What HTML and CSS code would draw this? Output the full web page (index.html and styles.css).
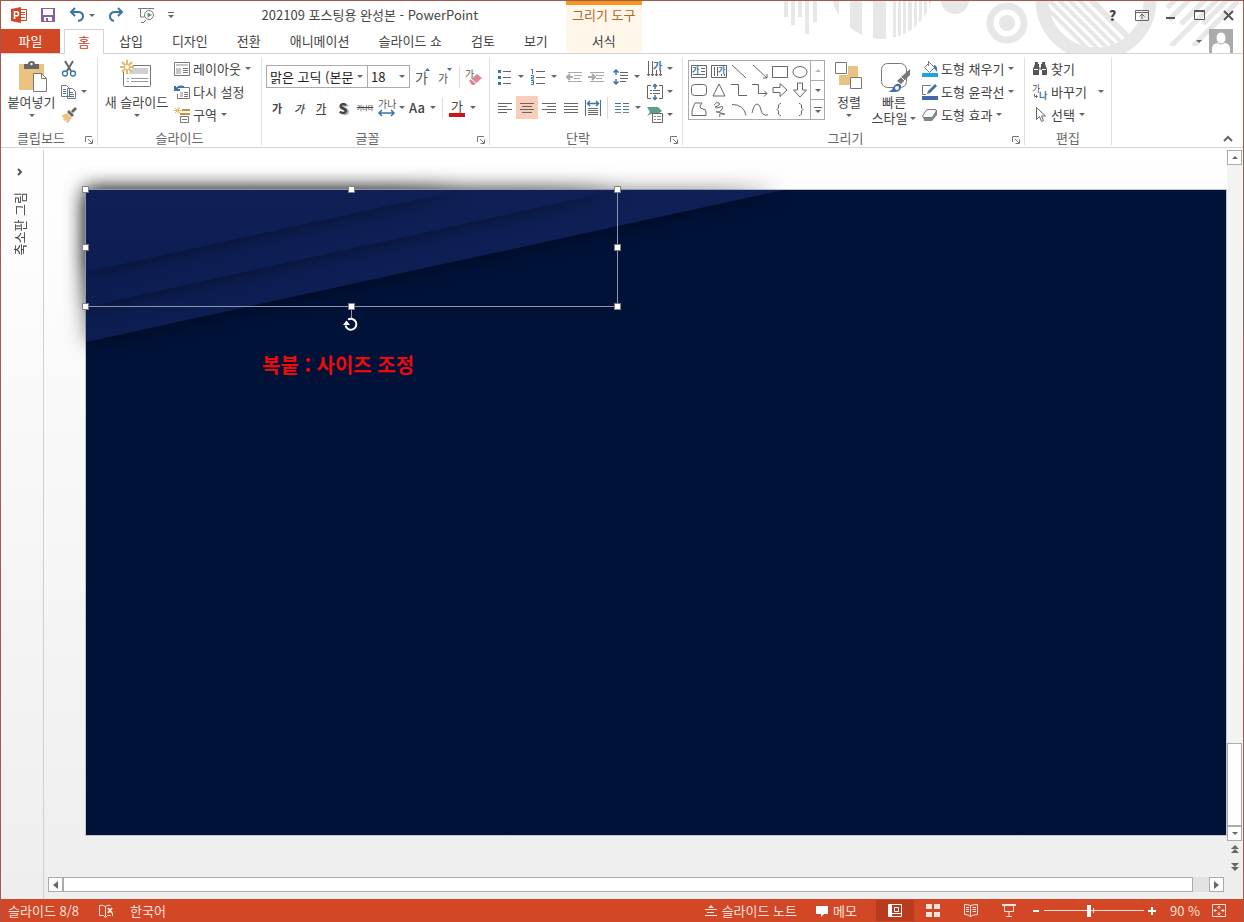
FILE: index.html
```html
<!DOCTYPE html>
<html lang="ko">
<head>
  <meta charset="UTF-8">
  <title>202109 포스팅용 완성본 - PowerPoint</title>
  <link rel="stylesheet" href="styles.css">
</head>
<body>

  <header class="header">
    <svg class="header-art" width="464" height="52" viewBox="0 1 464 52" fill="#e7e7e7" aria-hidden="true">
      <defs>
        <clipPath id="disc"><circle cx="103" cy="-12" r="51"/></clipPath>
        <clipPath id="hole"><circle cx="316" cy="0" r="48"/></clipPath>
        <clipPath id="corner"><path d="M386 0h74v46h-74z"/></clipPath>
      </defs>
      <path d="M5 0h4v17H5zM12 0h4v25h-4zM19 0h4v17h-4zM26 0h4v34h-4zM34 0h4v22h-4z"/>
      <path clip-path="url(#disc)" d="M50 0h10v40H50zM71 0h12v40H71zM94 0h13v40H94zM114 0h3v40h-3zM119 0h3v40h-3zM124 0h3v40h-3zM129 0h4v40h-4zM135 0h3v40h-3zM140 0h3v40h-3zM145 0h3v40h-3zM150 0h3v40h-3z"/>
      <circle cx="176" cy="0" r="14"/>
      <circle cx="228" cy="23" r="17" fill="none" stroke="#e7e7e7" stroke-width="7"/>
      <circle cx="228" cy="23" r="8"/>
      <circle cx="317" cy="0" r="54" fill="none" stroke="#e7e7e7" stroke-width="13"/>
      <g clip-path="url(#hole)" stroke="#e7e7e7" stroke-width="4">
        <path d="M262 2l50 50M270 0l50 50M280 0l50 50M290 0l50 50M300 0l50 50"/>
        <path d="M312 0l50 50" stroke-width="6"/>
      </g>
      <g clip-path="url(#corner)" stroke="#e7e7e7" stroke-width="5">
        <path d="M388 8l12-12M390 20l24-24M402 24l28-28M392 46l50-50M424 24l28-28M414 46l46-46"/>
      </g>
    </svg>

    <div class="title-row">
      <div class="quick-access">
        <button aria-label="PowerPoint">
          <svg width="16" height="16" viewBox="0 0 16 16"><path fill="#fff" stroke="#d24726" d="M8.500 2.500h7v11h-7z"/><path fill="#d24726" d="M10 5h4v1h-4zM10 7h4v1h-4zM10 10h4v1h-4z"/><path fill="#d24726" d="M0 2l10-2v16L0 14z"/><path fill="none" stroke="#fff" stroke-width="1.600" d="M3.500 12V4.800h2.300q1.700 0 1.700 2t-1.700 2H3.500"/></svg>
        </button>
        <button aria-label="저장">
          <svg width="16" height="16" viewBox="0 0 16 16"><path fill="#8560a8" d="M1 1h14v14H1z"/><path fill="#fff" d="M3 2h10v6H3zM4 10h8v4H8v-3H6v3H4z"/></svg>
        </button>
        <button aria-label="실행 취소">
          <svg width="16" height="16" viewBox="0 0 16 16" fill="none" stroke="#3b73a8" stroke-width="2"><path d="M6 1L2 5l4 4M2 5h7q5 0 5 4.500Q14 13 9 14"/></svg>
          <span class="caret"></span>
        </button>
        <button aria-label="다시 실행">
          <svg width="16" height="16" viewBox="0 0 16 16" fill="none" stroke="#3b73a8" stroke-width="2"><path d="M10 1l4 4-4 4M14 5H7Q2 5 2 9.500 2 13 6 14"/></svg>
        </button>
        <button aria-label="처음부터 시작">
          <svg width="18" height="16" viewBox="0 0 18 16" fill="none" stroke="#777"><path d="M1 1.500h16M3.500 2v8h4M4 15.500h3M7 15l2-2"/><circle cx="12" cy="8" r="4.500" fill="#fff"/><path fill="#4f9b75" stroke="none" d="M10.500 5.500v5L15 8z"/></svg>
        </button>
        <button aria-label="빠른 실행 도구 모음 사용자 지정">
          <svg width="6" height="6" viewBox="0 0 6 6" fill="#666"><path d="M0 0h6v1H0zM0 3h6L3 6z"/></svg>
        </button>
      </div>
      <h1 class="doc-title">202109 포스팅용 완성본 - PowerPoint</h1>
    </div>
    <div class="context-title">그리기 도구</div>
    <div class="window-controls">
      <button aria-label="도움말" class="help">?</button>
      <button aria-label="리본 메뉴 표시 옵션">
        <svg width="14" height="11" viewBox="0 0 14 11" fill="none" stroke="#666"><path d="M.5.5h13v10H.5zM1 2.500h12M7 9V4M4.500 6.500L7 4l2.500 2.500"/></svg>
      </button>
      <button aria-label="최소화">
        <svg width="10" height="11" viewBox="0 0 10 11"><path fill="#555" d="M0 7h9v2H0z"/></svg>
      </button>
      <button aria-label="최대화">
        <svg width="11" height="11" viewBox="0 0 11 11" fill="none" stroke="#555"><path d="M.5.5h10v9H.5zM1 1.500h9"/></svg>
      </button>
      <button aria-label="닫기">
        <svg width="11" height="11" viewBox="0 0 11 11" stroke="#555" stroke-width="2"><path d="M1 1l9 9M10 1l-9 9"/></svg>
      </button>
    </div>

    <nav class="tabs">
      <button class="tab tab-file">파일</button>
      <button class="tab tab-active">홈</button>
      <button class="tab">삽입</button>
      <button class="tab">디자인</button>
      <button class="tab">전환</button>
      <button class="tab">애니메이션</button>
      <button class="tab">슬라이드 쇼</button>
      <button class="tab">검토</button>
      <button class="tab">보기</button>
    </nav>
    <button class="tab tab-context">서식</button>
    <div class="account">
      <span class="caret"></span>
      <button aria-label="계정">
        <svg width="24" height="24" viewBox="0 0 24 24"><path fill="#ababab" d="M0 0h24v24H0z"/><path fill="#fff" d="M3 24v-4q0-6 6-6h6q6 0 6 6v4z"/><ellipse cx="12" cy="9" rx="5" ry="6" fill="#fff" stroke="#ababab"/></svg>
      </button>
    </div>
  </header>

  <section class="ribbon">
    <!-- Clipboard -->
    <div class="group">
      <div class="group-body">
        <button class="big big-paste">
          <svg width="32" height="32" viewBox="0 0 32 32"><path fill="#eac282" d="M3 4h25v26H3z"/><path fill="#666" d="M8 4h4q0-3 3.500-3T19 4h4v5H8z"/><circle cx="15.500" cy="4" r="1.200" fill="#fff"/><path fill="#fff" stroke="#777" d="M17.500 13.500h8l5 5v13h-13z"/><path fill="none" stroke="#777" d="M25.500 13.500v5h5"/></svg>
          <span>붙여넣기</span>
          <span class="caret"></span>
        </button>
        <div class="stack stack-icons">
          <button aria-label="잘라내기"><svg width="16" height="16" viewBox="0 0 16 16" fill="none"><path stroke="#666" stroke-width="2" d="M4 0l6 10M12 0L6 10"/><circle cx="4" cy="12.500" r="2.500" stroke="#3b73a8" stroke-width="1.300"/><circle cx="12" cy="12.500" r="2.500" stroke="#3b73a8" stroke-width="1.300"/></svg></button>
          <button aria-label="복사"><svg width="16" height="16" viewBox="0 0 16 16" fill="#fff" stroke="#777"><path d="M.5 1.500h5l3 3v8h-8zM6.500 4.500h5l3 3v7h-8z"/><path stroke="#3b73a8" d="M2 5.500h3M2 7.500h3M2 9.500h3M8 8.500h4M8 10.500h5M8 12.500h5"/></svg><span class="caret"></span></button>
          <button aria-label="서식 복사"><svg width="16" height="16" viewBox="0 0 16 16"><path fill="#eac282" d="M0 9l6-3 5 5-4 5-2-1 1-2-3 1-1-2 1-1z"/><path fill="#666" d="M6 5l2-2 5 5-2 2zM10 4l4-4 2 2-4 4z"/></svg></button>
        </div>
      </div>
      <div class="group-foot"><span>클립보드</span><button class="launcher" aria-label="클립보드 옵션"><svg width="8" height="8" viewBox="0 0 8 8" fill="none" stroke="#777"><path d="M.5 6V.5H7M3 3l4 4M7.500 3.500v4h-4"/></svg></button></div>
    </div>

    <!-- Slides -->
    <div class="group">
      <div class="group-body">
        <button class="big big-slide">
          <svg width="32" height="32" viewBox="0 0 32 32"><path fill="#fff" stroke="#777" d="M2.500 5.500h27v20q0 1-1 1h-25q-1 0-1-1z"/><path fill="#d0d0d0" d="M11 8h16v6H7z"/><path stroke="#999" d="M6 18.500h2M10 18.500h17M6 21.500h2M10 21.500h17"/><circle cx="6" cy="7" r="6" fill="#fff"/><path stroke="#e5b767" stroke-width="2" d="M6 0v14M-1 7h14M1 2l10 10M11 2L1 12"/><circle cx="6" cy="7" r="2" fill="#fff"/></svg>
          <span>새 슬라이드</span>
          <span class="caret"></span>
        </button>
        <div class="stack stack-slide">
          <button><svg width="16" height="16" viewBox="0 0 16 16" fill="none" stroke="#777"><path d="M.5 1.500h15v13H.5z"/><path fill="#c4c4c4" stroke="none" d="M2 3h12v2H2zM2 7h5v6H2z"/><path d="M9 7.500h5M9 9.500h5M9 11.500h5"/></svg>레이아웃<span class="caret"></span></button>
          <button><svg width="16" height="16" viewBox="0 0 16 16" fill="none" stroke="#777"><path d="M5 3.500h10.500v11h-12V10"/><path fill="#c4c4c4" stroke="none" d="M6 8h3v5H6z"/><path d="M10 8.500h4M10 10.500h4M10 12.500h4"/><path stroke="#3b73a8" stroke-width="2" d="M1 2v4h5M1 6q4-5 9-3"/></svg>다시 설정</button>
          <button><svg width="16" height="16" viewBox="0 0 16 16" fill="none"><path stroke="#e5b767" d="M4 0v7M0 3.500h7M1 1l5 5M6 1L1 6"/><path stroke="#c98f3e" stroke-width="2" d="M8 3h8M6 7h10"/><path stroke="#777" d="M6.500 9.500h8v6h-8zM8 12.500h5"/></svg>구역<span class="caret"></span></button>
        </div>
      </div>
      <div class="group-foot"><span>슬라이드</span></div>
    </div>

    <!-- Font -->
    <div class="group">
      <div class="group-body tool-rows">
        <div class="tools">
          <label class="combo combo-font">
            <select aria-label="글꼴"><option>맑은 고딕 (본문</option></select>
            <span class="caret"></span>
          </label>
          <label class="combo combo-size">
            <select aria-label="글꼴 크기"><option>18</option></select>
            <span class="caret"></span>
          </label>
          <button class="tool grow" aria-label="글꼴 크기 크게"><svg width="18" height="18" viewBox="0 0 18 18"><text x="1" y="15" font-size="14">가</text><path fill="#3b73a8" d="M11 3h5l-2.500-3z"/></svg></button>
          <button class="tool" aria-label="글꼴 크기 작게"><svg width="18" height="18" viewBox="0 0 18 18"><text x="2" y="15" font-size="11">가</text><path fill="#3b73a8" d="M11 0h5l-2.500 3z"/></svg></button>
          <span class="divider"></span>
          <button class="tool" aria-label="모든 서식 지우기"><svg width="18" height="18" viewBox="0 0 18 18"><text x="0" y="10" font-size="10">가</text><path fill="#dd8594" d="M4 13l8-7 5 4-8 7H7z"/><path stroke="#fff" d="M6 11l5 4"/></svg></button>
        </div>
        <div class="tools">
          <button class="tool hangul"><b>가</b></button>
          <button class="tool hangul"><i>가</i></button>
          <button class="tool hangul"><u>가</u></button>
          <button class="tool shadow">S</button>
          <button class="tool strike"><s>가나다</s></button>
          <button class="tool spacing" aria-label="문자 간격"><svg width="18" height="18" viewBox="0 0 18 18"><text x="0" y="9" font-size="10">가나</text><path fill="none" stroke="#3b73a8" stroke-width="1.500" d="M1 14h15M4 11l-3 3 3 3M13 11l3 3-3 3"/></svg><span class="caret"></span></button>
          <button class="tool split case">Aa<span class="caret"></span></button>
          <span class="divider"></span>
          <button class="tool split font-color"><span>가</span><span class="caret"></span></button>
        </div>
      </div>
      <div class="group-foot"><span>글꼴</span><button class="launcher" aria-label="글꼴 옵션"><svg width="8" height="8" viewBox="0 0 8 8" fill="none" stroke="#777"><path d="M.5 6V.5H7M3 3l4 4M7.500 3.500v4h-4"/></svg></button></div>
    </div>

    <!-- Paragraph -->
    <div class="group">
      <div class="group-body">
        <div class="tool-rows">
          <div class="tools">
            <button class="tool split" aria-label="글머리 기호"><svg width="16" height="16" viewBox="0 0 16 16"><path stroke="#666" d="M6 2.500h8M6 8.500h8M6 14.500h8"/><path fill="#3b73a8" d="M1 1h3v3H1zM1 7h3v3H1zM1 13h3v3H1z"/></svg><span class="caret"></span></button>
            <button class="tool split" aria-label="번호 매기기"><svg width="16" height="16" viewBox="0 0 16 16"><path stroke="#666" d="M6 2.500h9M6 8.500h9M6 14.500h9"/><path fill="none" stroke="#3b73a8" d="M1 .5h1.500V5M1 6.500h2.500v2h-2v1.500H4M1 11.500h2.500v4H1M1.500 13.500h2"/></svg><span class="caret"></span></button>
            <button class="tool push" aria-label="목록 수준 줄임"><svg width="16" height="16" viewBox="0 0 16 16" stroke="#aaa" fill="none"><path d="M2 3.500h14M8 6.500h8M8 9.500h6M2 12.500h14"/><path stroke-width="2" d="M4 5L1 8l3 3M1 8h6"/></svg></button>
            <button class="tool" aria-label="목록 수준 늘림"><svg width="16" height="16" viewBox="0 0 16 16" stroke="#aaa" fill="none"><path d="M2 3.500h14M8 6.500h8M8 9.500h6M2 12.500h14"/><path stroke-width="2" d="M4 5l3 3-3 3M7 8H0"/></svg></button>
            <button class="tool split push" aria-label="줄 간격"><svg width="16" height="16" viewBox="0 0 16 16" fill="none"><path stroke="#666" d="M7 3.500h8M7 6.500h8M7 9.500h8M7 12.500h6"/><path stroke="#3b73a8" stroke-width="1.500" d="M3 1v5M.5 3.500L3 1l2.500 2.500M3 10v5M.5 12.500L3 15l2.500-2.500"/></svg><span class="caret"></span></button>
          </div>
          <div class="tools">
            <button class="tool" aria-label="왼쪽 맞춤"><svg width="16" height="16" viewBox="0 0 16 16" stroke="#666"><path d="M1 3.500h14M1 6.500h9M1 9.500h14M1 12.500h9"/></svg></button>
            <button class="tool tool-on" aria-label="가운데 맞춤"><svg width="16" height="16" viewBox="0 0 16 16" stroke="#666"><path d="M1 3.500h14M3 6.500h10M1 9.500h14M3 12.500h10"/></svg></button>
            <button class="tool" aria-label="오른쪽 맞춤"><svg width="16" height="16" viewBox="0 0 16 16" stroke="#666"><path d="M1 3.500h14M6 6.500h9M1 9.500h14M6 12.500h9"/></svg></button>
            <button class="tool" aria-label="양쪽 맞춤"><svg width="16" height="16" viewBox="0 0 16 16" stroke="#666"><path d="M1 3.500h14M1 6.500h14M1 9.500h14M1 12.500h14"/></svg></button>
            <button class="tool" aria-label="균등 분할"><svg width="16" height="16" viewBox="0 0 16 16" fill="none" stroke="#666"><path d="M3 8.500h10M3 10.500h10M3 12.500h10M3 14.500h10"/><path stroke="#3b73a8" d="M.5 0v16M15.500 0v16"/><path stroke="#3b73a8" stroke-width="1.500" d="M3 3.500h10M5 1L2.500 3.500 5 6M11 1l2.500 2.500L11 6"/></svg></button>
            <span class="divider"></span>
            <button class="tool split" aria-label="열"><svg width="16" height="16" viewBox="0 0 16 16"><path stroke="#3b73a8" d="M1 3.500h6M1 9.500h6M9 3.500h6M9 9.500h6"/><path stroke="#6d8a92" d="M1 6.500h6M1 12.500h6M9 6.500h6M9 12.500h6"/></svg><span class="caret"></span></button>
          </div>
        </div>
        <div class="stack stack-text">
          <button aria-label="텍스트 방향"><svg width="16" height="16" viewBox="0 0 16 16" fill="none" stroke="#666"><path d="M1.500 0v15M5.500 0v15M9.500 9v6M13.500 9v6M0 13l1.500 2L3 13M4 13l1.500 2L7 13M8 13l1.500 2 1.500-2M12 13l1.500 2 1.500-2"/><text x="6" y="9" font-size="10" class="blue">가</text></svg><span class="caret"></span></button>
          <button aria-label="텍스트 맞춤"><svg width="16" height="16" viewBox="0 0 16 16" fill="none" stroke="#666"><path d="M4 1.500H.5v13H4M12 1.500h3.500v13H12M3 6.500h2M6 6.500h7M3 9.500h2M6 9.500h7"/><path stroke="#3b73a8" stroke-width="1.500" d="M8 0v5M6 2.500L8 .5l2 2M8 11v5M6 13.500l2 2 2-2"/></svg><span class="caret"></span></button>
          <button aria-label="SmartArt로 변환"><svg width="16" height="16" viewBox="0 0 16 16"><path fill="#5c9f86" d="M0 0h11l4 4-4 3H4L0 9l3-4z"/><path fill="#fff" stroke="#666" d="M5.500 6.500h10v9h-10z"/><path stroke="#888" d="M7 9.500h2M10 9.500h4M7 12.500h2M10 12.500h4"/></svg><span class="caret"></span></button>
        </div>
      </div>
      <div class="group-foot"><span>단락</span><button class="launcher" aria-label="단락 옵션"><svg width="8" height="8" viewBox="0 0 8 8" fill="none" stroke="#777"><path d="M.5 6V.5H7M3 3l4 4M7.500 3.500v4h-4"/></svg></button></div>
    </div>

    <!-- Drawing -->
    <div class="group">
      <div class="group-body">
        <div class="gallery">
          <div class="shapes">
            <button aria-label="텍스트 상자"><svg width="16" height="16" viewBox="0 0 16 16"><path d="M.5 2.500h15v12H.5zM10 5.500h4M10 8.500h4M2 11.500h12"/><text x="1" y="10" font-size="8" class="blue">가</text></svg></button>
            <button aria-label="세로 텍스트 상자"><svg width="16" height="16" viewBox="0 0 16 16"><path d="M.5 2.500h15v12H.5zM3.500 4v9M6.500 4v9M10.500 11v2M13.500 11v2"/><text x="7" y="10" font-size="8" class="blue">가</text></svg></button>
            <button aria-label="선"><svg width="16" height="16" viewBox="0 0 16 16"><path d="M1 2l14 13"/></svg></button>
            <button aria-label="화살표"><svg width="16" height="16" viewBox="0 0 16 16"><path d="M1 2l14 13M15 11v4h-4"/></svg></button>
            <button aria-label="직사각형"><svg width="16" height="16" viewBox="0 0 16 16"><path d="M.5 3.500h15v11H.5z"/></svg></button>
            <button aria-label="타원"><svg width="16" height="16" viewBox="0 0 16 16"><ellipse cx="8" cy="9" rx="7" ry="5.500"/></svg></button>
            <button aria-label="둥근 직사각형"><svg width="16" height="16" viewBox="0 0 16 16"><rect x=".5" y="2.500" width="15" height="11" rx="3"/></svg></button>
            <button aria-label="삼각형"><svg width="16" height="16" viewBox="0 0 16 16"><path d="M8 2l6 12H2z"/></svg></button>
            <button aria-label="꺾인 연결선"><svg width="16" height="16" viewBox="0 0 16 16"><path d="M0 2.500h7.500v11H16"/></svg></button>
            <button aria-label="꺾인 화살표 연결선"><svg width="16" height="16" viewBox="0 0 16 16"><path d="M0 2.500h6.500v9H15M12 8.500l3 3-3 3"/></svg></button>
            <button aria-label="오른쪽 화살표"><svg width="16" height="16" viewBox="0 0 16 16"><path d="M1 5.500h7v-4L15 8l-7 6.500v-4H1z"/></svg></button>
            <button aria-label="아래쪽 화살표"><svg width="16" height="16" viewBox="0 0 16 16"><path d="M5.500 1v7h-4L8 15l6.500-7h-4V1z"/></svg></button>
            <button aria-label="자유형"><svg width="16" height="16" viewBox="0 0 16 16"><path d="M4 2h7L9 5q0 3 3 3 3 0 3 3v3.500H1V10q1-4 3-8z"/></svg></button>
            <button aria-label="자유 곡선"><svg width="16" height="16" viewBox="0 0 16 16"><path d="M3 4Q6 0 8 2T4 6q1 2 5 0t2 2-5 3 4 1 2 1-3 3"/></svg></button>
            <button aria-label="호"><svg width="16" height="16" viewBox="0 0 16 16"><path d="M1 3.500q12 0 14 11"/></svg></button>
            <button aria-label="곡선"><svg width="16" height="16" viewBox="0 0 16 16"><path d="M0 12Q2 3 5 3t4 6 7 5"/></svg></button>
            <button aria-label="왼쪽 중괄호"><svg width="16" height="16" viewBox="0 0 16 16"><path d="M9 2.500H8L6.500 4v3L5 8.500 6.500 10v3L8 14.500h1"/></svg></button>
            <button aria-label="오른쪽 중괄호"><svg width="16" height="16" viewBox="0 0 16 16"><path d="M7 2.500h1L9.500 4v3L11 8.500 9.500 10v3L8 14.500H7"/></svg></button>
          </div>
          <div class="gallery-nav">
            <button aria-label="위로"><span class="caret caret-up"></span></button>
            <button aria-label="아래로"><span class="caret"></span></button>
            <button aria-label="자세히"><svg width="8" height="6" viewBox="0 0 8 6" fill="#666"><path d="M0 0h8v1H0zM1 3h6L4 6z"/></svg></button>
          </div>
        </div>
        <button class="big big-arrange">
          <svg width="32" height="32" viewBox="0 0 32 32"><path fill="#eac282" d="M15 6h10v11H15zM6 15h11v10H6z"/><path fill="#fff" stroke="#777" d="M2.500 2.500h11v11h-11zM17.500 17.500h11v11h-11z"/></svg>
          <span>정렬</span>
          <span class="caret"></span>
        </button>
        <button class="big big-style">
          <svg width="32" height="32" viewBox="0 0 32 32"><rect x="3.500" y="3.500" width="25" height="24" rx="6" fill="#fff" stroke="#777"/><path fill="#777" d="M32 9v6l-6 6-4-3zM22 18l4 3-3 3-4-3z"/><path stroke="#fff" d="M23 17l4 4"/><path fill="#3b73a8" d="M10 32q4-1 6-6 3-4 7-1 1 7-6 7z"/><circle cx="19" cy="28" r="2" fill="#fff"/></svg>
          <span>빠른</span>
          <span class="with-caret">스타일<span class="caret"></span></span>
        </button>
        <div class="stack stack-shape">
          <button><svg width="16" height="16" viewBox="0 0 16 16" fill="none"><path stroke="#777" d="M7.500 1.500l5 5-5 5-5-5zM6.500 5V0"/><path fill="#3b73a8" d="M12 4q4 1 3 7l-3-4z"/><path fill="#1ba3e0" d="M0 12h16v4H0z"/></svg>도형 채우기<span class="caret"></span></button>
          <button><svg width="16" height="16" viewBox="0 0 16 16"><path fill="none" stroke="#777" d="M9 1.500H.5v9H4"/><path fill="#3b73a8" d="M5 10l1-3 7-7 2 2-7 7z"/><path fill="#4668a8" d="M0 12h16v4H0z"/></svg>도형 윤곽선<span class="caret"></span></button>
          <button><svg width="16" height="16" viewBox="0 0 16 16"><path fill="#888" d="M1 9l1 5h8l5-6V3z"/><path fill="#fff" stroke="#777" d="M6 2.500h7q2 0 1 2l-3 5q-1 1-2 1H2q-2 0-1-2l3-5q1-1 2-1z"/></svg>도형 효과<span class="caret"></span></button>
        </div>
      </div>
      <div class="group-foot"><span>그리기</span><button class="launcher" aria-label="그리기 옵션"><svg width="8" height="8" viewBox="0 0 8 8" fill="none" stroke="#777"><path d="M.5 6V.5H7M3 3l4 4M7.500 3.500v4h-4"/></svg></button></div>
    </div>

    <!-- Editing -->
    <div class="group">
      <div class="group-body">
        <div class="stack stack-edit">
          <button><svg width="16" height="16" viewBox="0 0 16 16"><path fill="#555" d="M3 1h3v2h1v3h2V3h1V1h3v2l2 5v6h-5V9H7v5H1V8l2-5z"/><path stroke="#fff" d="M2 8.500h4M10 8.500h4M8 3v6"/></svg>찾기</button>
          <button><svg width="16" height="16" viewBox="0 0 16 16"><text x="0" y="8" font-size="9">가</text><text x="7" y="15" font-size="9" class="blue">나</text><path fill="none" stroke="#3b73a8" d="M2.500 10v2.500H5M4 11l1.500 1.500L4 14"/></svg>바꾸기<span class="caret caret-far"></span></button>
          <button><svg width="16" height="16" viewBox="0 0 16 16"><path fill="#fff" stroke="#666" d="M4.500.5v12l3-3 2 5 2-1-2-4.500h4z"/></svg>선택<span class="caret"></span></button>
        </div>
      </div>
      <div class="group-foot"><span>편집</span></div>
    </div>

    <button class="collapse" aria-label="리본 메뉴 축소"><svg width="10" height="6" viewBox="0 0 10 6" fill="none" stroke="#666" stroke-width="2"><path d="M1 5l4-4 4 4"/></svg></button>
  </section>

  <main class="workspace">
    <aside class="thumbs">
      <button aria-label="축소판 그림 확장"><svg width="6" height="8" viewBox="0 0 6 8" fill="none" stroke="#555" stroke-width="2"><path d="M1 1l3 3-3 3"/></svg></button>
      <span class="thumbs-label">축소판 그림</span>
    </aside>

    <div class="editor">
      <div class="stage">
        <div class="slide">
          <svg class="drawing" width="740" height="200" viewBox="0 0 740 200" aria-hidden="true">
            <defs>
              <linearGradient id="navy" x1="0" y1="0" x2="0" y2="1"><stop offset="0" stop-color="#0e2056"/><stop offset="1" stop-color="#0c1d52"/></linearGradient>
            </defs>
            <path class="band" d="M0 0h697L0 152z"/>
            <path class="band" d="M0 0h532L0 117z"/>
            <path class="band" d="M0 0h375L0 82z"/>
            <path fill="none" stroke="#8f96a8" d="M-.5-.5h532v117H-.5zM265.500 116v12"/>
            <g fill="#fff" stroke="#808080">
              <path d="M-3.500-3.500h6v6h-6zM262.500-3.500h6v6h-6zM528.500-3.500h6v6h-6zM-3.500 54.500h6v6h-6zM528.500 54.500h6v6h-6zM-3.500 113.500h6v6h-6zM262.500 113.500h6v6h-6zM528.500 113.500h6v6h-6z"/>
            </g>
            <path fill="none" stroke="#fff" stroke-width="2" d="M262 129.500a5.500 5.500 0 1 1-2.500 6"/>
            <path fill="#fff" d="M257 135l3.500-4.500 3.500 4.500z"/>
          </svg>
          <p class="slide-text">복붙 : 사이즈 조정</p>
        </div>
      </div>

      <div class="vscroll">
        <button class="scroll-btn" aria-label="위로 스크롤"><span class="caret caret-up"></span></button>
        <div class="vtrack"><div class="vthumb"></div></div>
        <button class="scroll-btn" aria-label="아래로 스크롤"><span class="caret"></span></button>
        <button class="jump" aria-label="이전 슬라이드"><svg width="8" height="9" viewBox="0 0 8 9" fill="#666"><path d="M4 0l4 4H0zM4 4l4 4H0z"/></svg></button>
        <button class="jump" aria-label="다음 슬라이드"><svg width="8" height="9" viewBox="0 0 8 9" fill="#666"><path d="M4 5L0 1h8zM4 9L0 5h8z"/></svg></button>
      </div>

      <div class="hscroll">
        <button class="scroll-btn" aria-label="왼쪽으로 스크롤"><svg width="5" height="8" viewBox="0 0 5 8" fill="#666"><path d="M5 0v8L0 4z"/></svg></button>
        <div class="htrack"><div class="hthumb"></div></div>
        <button class="scroll-btn" aria-label="오른쪽으로 스크롤"><svg width="5" height="8" viewBox="0 0 5 8" fill="#666"><path d="M0 0v8l5-4z"/></svg></button>
      </div>
    </div>
  </main>

  <footer class="status">
    <span class="status-page">슬라이드 8/8</span>
    <button aria-label="맞춤법 검사"><svg width="16" height="14" viewBox="0 0 16 14" fill="none" stroke="#fbe3dc"><path d="M7.500 2.500q-3-2-6-1v10h4l2 2 2-2h3M7.500 2.500v10M7.500 2.500q2-2 5-1M14.500 9v3"/><path stroke-width="2" d="M10 4l4 5M14 4l-4 5"/></svg></button>
    <button>한국어</button>
    <div class="status-right">
      <button class="status-note"><svg width="12" height="12" viewBox="0 0 12 12" fill="#fbe3dc"><path d="M6 0l3 3H3zM0 4h12v1H0zM2 7h7v1H2zM0 10h12v1H0z"/></svg>슬라이드 노트</button>
      <button class="status-note"><svg width="12" height="12" viewBox="0 0 12 12" fill="#fff"><path d="M0 1h12v8H8l-3 3V9H0z"/></svg>메모</button>
      <div class="views">
        <button class="view view-on" aria-label="기본"><svg width="14" height="13" viewBox="0 0 14 13" fill="none" stroke="#fff"><path d="M.5.5h13v12H.5zM3.500 1v11M6.500 3.500h4v4h-4zM4 9.500h9"/><path stroke-width="2" d="M2 1v11"/></svg></button>
        <button class="view" aria-label="여러 슬라이드"><svg width="14" height="13" viewBox="0 0 14 13" fill="#fbe3dc"><path d="M0 0h6v5H0zM8 0h6v5H8zM0 8h6v5H0zM8 8h6v5H8z"/></svg></button>
        <button class="view" aria-label="읽기용 보기"><svg width="14" height="13" viewBox="0 0 14 13" fill="none" stroke="#fbe3dc"><path d="M6.500 1.500q-3-1-6-1v10q4 0 6 2 3-2 7-2V.5q-4 0-7 1v11M2 3.500h3M2 5.500h3M2 7.500h3M8.500 3.500H12M8.500 5.500H12M8.500 7.500H12"/></svg></button>
        <button class="view" aria-label="슬라이드 쇼"><svg width="14" height="13" viewBox="0 0 14 13" fill="none" stroke="#fbe3dc"><path d="M2.500 2v5.500h9V2M7 8v4M4 12.500h6"/><path stroke-width="2" d="M0 1h14"/></svg></button>
      </div>
      <div class="zoom">
        <button aria-label="축소"><svg width="8" height="8" viewBox="0 0 8 8"><path fill="#fff" d="M1 3h6v2H1z"/></svg></button>
        <input type="range" min="10" max="190" value="90" aria-label="확대/축소">
        <button aria-label="확대"><svg width="8" height="8" viewBox="0 0 8 8"><path fill="#fff" d="M0 3h3V0h2v3h3v2H5v3H3V5H0z"/></svg></button>
      </div>
      <button class="zoom-value">90 %</button>
      <button aria-label="창에 맞춤"><svg width="14" height="13" viewBox="0 0 14 13" fill="none" stroke="#fbe3dc"><path d="M.5.5h13v12H.5zM7 2v3M7 8v3M2 6.500h3M9 6.500h3M5.500 3.500L7 2l1.500 1.500M5.500 9.500L7 11l1.500-1.500M3.500 5L2 6.500 3.500 8M10.500 5L12 6.500 10.500 8"/></svg></button>
    </div>
  </footer>

</body>
</html>
```
FILE: styles.css
```css
* {
  box-sizing: border-box;
}

body {
  margin: 0;
  height: 100vh;
  display: flex;
  flex-direction: column;
  overflow: hidden;
  border: 1px solid #a35a4a;
  border-bottom: none;
  background-color: #ffffff;
  color: #444;
  font-family: "Noto Sans CJK KR", "Noto Sans", sans-serif;
  font-size: 13px;
  line-height: 16px;
}

button {
  display: flex;
  align-items: center;
  justify-content: center;
  margin: 0;
  padding: 0;
  border: none;
  background: none;
  color: inherit;
  font: inherit;
  white-space: nowrap;
  cursor: pointer;
}

svg {
  display: block;
  flex: none;
}

button svg {
  overflow: visible;
}

svg text {
  fill: #555;
  stroke: none;
}

svg text.blue {
  fill: #3b73a8;
  font-weight: 700;
}

.caret {
  display: inline-block;
  flex: none;
  border: 3px solid transparent;
  border-top-color: #666;
  border-bottom: none;
}

.caret-up {
  border-top: none;
  border-bottom: 3px solid #bbb;
}

/* Title bar and tabs */
.header {
  position: relative;
  display: grid;
  grid-template-columns: auto 76px 1fr;
  grid-template-rows: 28px 24px;
  border-bottom: 1px solid #d4d4d4;
}

.header-art {
  position: absolute;
  top: 0;
  right: 0;
}

.title-row {
  display: flex;
  align-items: center;
}

.quick-access {
  display: flex;
  gap: 13px;
  padding-left: 10px;
}

.quick-access .caret {
  margin-left: 4px;
}

.doc-title {
  flex: 1;
  margin: 0;
  text-align: center;
  font-size: 13px;
  font-weight: 400;
}

.context-title {
  padding-top: 2px;
  border-top: 4px solid #f5951d;
  background-color: #fef7ea;
  color: #b8622a;
  text-align: center;
}

.window-controls {
  position: relative;
  display: flex;
  justify-content: flex-end;
}

.window-controls button {
  width: 29px;
}

.window-controls .help {
  font-size: 14px;
  font-weight: 900;
}

.tabs {
  display: flex;
  gap: 1px;
  padding-right: 4px;
}

.tab {
  padding: 0 14px;
}

.tab-file {
  width: 59px;
  margin-right: 3px;
  background-color: #d24726;
  color: #fff;
}

.tab-active {
  height: 25px;
  padding: 0 13px;
  border: 1px solid #d4d4d4;
  border-bottom: none;
  background-color: #fff;
  color: #c8401f;
  position: relative;
}

.tab-context {
  background-color: #fef7ea;
}

.account {
  position: relative;
  display: flex;
  align-items: center;
  justify-content: flex-end;
  gap: 7px;
  padding-right: 10px;
}

/* Ribbon */
.ribbon {
  display: flex;
  flex: none;
  height: 94px;
  border-bottom: 1px solid #d4d4d4;
}

.group {
  display: flex;
  flex-direction: column;
  margin: 3px 0 2px;
  border-right: 1px solid #e0e0e0;
}

.group-body {
  display: flex;
  flex: 1;
  padding: 0 4px;
}

.group-foot {
  display: flex;
  align-items: center;
  height: 14px;
  color: #666;
}

.group-foot span {
  flex: 1;
  text-align: center;
}

.launcher {
  width: 16px;
  height: 12px;
  align-items: flex-end;
}

.big {
  flex-direction: column;
  justify-content: flex-start;
  padding-top: 3px;
}

.big > span {
  margin-top: 2px;
}

.big > .caret {
  margin-top: 4px;
}

.big-paste {
  width: 53px;
}

.big-slide {
  width: 69px;
}

.big-arrange {
  width: 40px;
  margin-left: 4px;
}

.big-style {
  width: 50px;
}

.big > .with-caret {
  display: flex;
  align-items: center;
  gap: 3px;
  margin-top: 0;
}

.stack {
  display: flex;
  flex-direction: column;
  align-items: flex-start;
}

.stack button {
  height: 23px;
  gap: 3px;
  padding-left: 3px;
}

.stack .caret {
  margin-left: 1px;
}

.stack-icons {
  width: 35px;
}

.stack-slide {
  width: 86px;
}

.stack-text {
  width: 34px;
}

.stack-shape {
  width: 101px;
}

.stack-edit {
  width: 78px;
}

.stack .caret-far {
  margin-left: 8px;
}

.tool-rows {
  display: flex;
  flex-direction: column;
  gap: 8px;
  padding-top: 8px;
}

.tools {
  display: flex;
  align-items: center;
  height: 23px;
}

.tool {
  width: 22px;
  height: 23px;
}

.tool-on {
  background-color: #f8cdb9;
}

.split {
  width: 33px;
  gap: 5px;
}

.spacing {
  width: 30px;
  gap: 3px;
}

.grow {
  margin-left: 2px;
}

.push {
  margin-left: 3px;
}

.divider {
  width: 1px;
  height: 22px;
  margin: 0 3px;
  background-color: #dcdcdc;
}

.combo {
  display: flex;
  align-items: center;
  height: 23px;
  padding-right: 4px;
  border: 1px solid #ababab;
}

.combo select {
  flex: 1;
  min-width: 0;
  padding: 0 0 0 3px;
  border: none;
  outline: none;
  appearance: none;
  background: none;
  color: #222;
  font: inherit;
}

.combo-font {
  width: 102px;
}

.combo-size {
  width: 43px;
  margin-left: -1px;
}

.hangul {
  font-size: 11px;
  font-weight: 500;
}

.shadow {
  font-size: 14px;
  font-weight: 900;
  text-shadow: 2px 1px 1px #aaa;
}

.strike {
  font-size: 6px;
  font-weight: 500;
}

.case {
  font-weight: 500;
}

.font-color > span:first-child {
  height: 18px;
  padding: 0 2px;
  border-bottom: 4px solid #d01414;
  line-height: 13px;
}

/* Shape gallery */
.gallery {
  display: flex;
  width: 137px;
  height: 60px;
  margin: 3px 0 0 1px;
  border: 1px solid #ababab;
}

.shapes {
  flex: 1;
  display: grid;
  grid-template-columns: repeat(6, 1fr);
}

.shapes svg {
  fill: none;
  stroke: #666;
}

.gallery-nav {
  display: flex;
  flex-direction: column;
  width: 14px;
  border-left: 1px solid #ababab;
}

.gallery-nav button {
  flex: 1;
}

.gallery-nav button + button {
  border-top: 1px solid #ababab;
}

.collapse {
  align-self: flex-end;
  margin: 0 10px 5px auto;
}

/* Workspace */
.workspace {
  display: flex;
  flex: 1;
  min-height: 0;
  background: linear-gradient(#ffffff, #eeeeee);
}

.thumbs {
  display: flex;
  flex-direction: column;
  align-items: center;
  gap: 16px;
  width: 43px;
  margin-top: 2px;
  padding: 18px 4px 0 0;
  border-right: 1px solid #d0d0d0;
}

.thumbs-label {
  writing-mode: vertical-rl;
  text-orientation: sideways;
  transform: rotate(180deg);
}

.editor {
  flex: 1;
  display: grid;
  grid-template-columns: 1fr 17px;
  grid-template-rows: 1fr 24px;
}

.stage {
  display: flex;
  padding: 42px 0 40px 42px;
}

.slide {
  position: relative;
  flex: 1;
  background-color: #001238;
  box-shadow: 0 0 0 1px #c4c8d0;
}

/* shapes on the slide keep their own coordinates */
.drawing {
  position: absolute;
  top: 0;
  left: 0;
  overflow: visible;
}

.band {
  fill: url(#navy);
  filter: drop-shadow(0 0 10px rgba(0, 0, 0, 0.5));
}

.slide-text {
  position: absolute;
  top: 162px;
  left: 176px;
  margin: 0;
  color: #ee0a0a;
  font-size: 20px;
  font-weight: 700;
  line-height: 26px;
}

.vscroll {
  display: flex;
  flex-direction: column;
  align-items: center;
  padding-top: 2px;
}

.scroll-btn {
  width: 15px;
  height: 15px;
  flex: none;
  border: 1px solid #ababab;
  background-color: #fff;
}

.scroll-btn .caret-up {
  border-bottom-color: #666;
}

.vtrack {
  flex: 1;
  display: flex;
  align-items: flex-end;
  width: 15px;
  background-color: #f3f3f3;
}

.vthumb {
  width: 15px;
  height: 83px;
  border: 1px solid #ababab;
  background-color: #fff;
}

.jump {
  width: 15px;
  height: 17px;
}

.hscroll {
  grid-column: 1 / 3;
  display: flex;
  padding: 2px 19px 0 4px;
}

.htrack {
  flex: 1;
  height: 15px;
  padding-right: 16px;
  background-color: #e3e3e3;
}

.hthumb {
  height: 15px;
  border: 1px solid #ababab;
  background-color: #fff;
}

/* Status bar */
.status {
  display: flex;
  align-items: center;
  flex: none;
  height: 23px;
  padding: 0 18px 0 7px;
  margin: 0 -1px;
  border-left: 1px solid #d24726;
  background-color: #d24726;
  color: #fbe3dc;
}

.status > button {
  margin-left: 16px;
}

.status-page {
  margin-right: 3px;
}

.status-right {
  display: flex;
  align-items: center;
  margin-left: auto;
}

.status-note {
  gap: 5px;
  margin-right: 19px;
}

.views {
  display: flex;
}

.view {
  width: 38px;
  height: 21px;
}

.view-on {
  background-color: #b83b1d;
}

.zoom {
  display: flex;
  align-items: center;
  margin: 0 14px 0 4px;
}

.zoom input {
  width: 100px;
  height: 14px;
  margin: 0 4px;
  appearance: none;
  background: linear-gradient(#fbe3dc, #fbe3dc) center / 100% 1px no-repeat,
    linear-gradient(#fbe3dc, #fbe3dc) center / 1px 5px no-repeat;
}

.zoom input::-webkit-slider-thumb {
  appearance: none;
  width: 4px;
  height: 12px;
  background-color: #fff;
}

.zoom-value {
  margin-right: 12px;
}
```
